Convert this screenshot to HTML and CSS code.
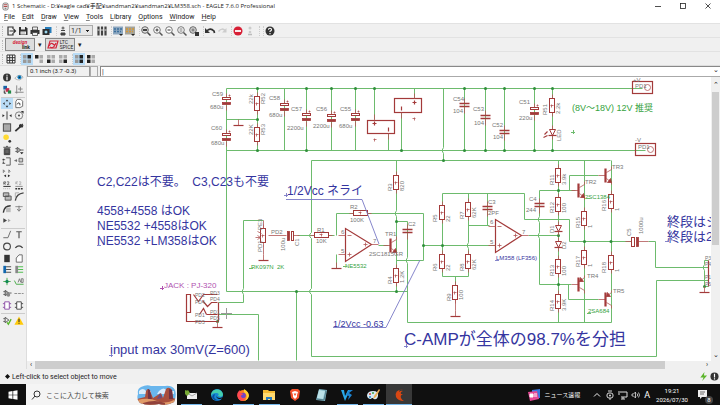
FILE: index.html
```
<!DOCTYPE html>
<html lang="ja">
<head>
<meta charset="utf-8">
<meta name="viewport" content="width=device-width, initial-scale=1">
<title>1 Schematic - EAGLE 7.6.0 Professional</title>
<link rel="stylesheet" href="styles.css">
</head>
<body>
<header class="titlebar">
  <svg class="app-icon" viewBox="0 0 8 10"><rect x="1" y="1" width="6" height="8" rx="2" fill="#eee" stroke="#777"/><path d="M2 3h4M2 5h4" stroke="#a33"/><path d="M3 7h2" stroke="#555"/></svg>
  <h1 class="title">1 Schematic - D:¥eagle cad¥手配¥sandman2¥sandman2¥LM358.sch - EAGLE 7.6.0 Professional</h1>
  <div class="window-controls">
    <button aria-label="Minimize"><svg viewBox="0 0 8 8"><path d="M1 4.500h6" stroke="#222" stroke-width=".8"/></svg></button>
    <button aria-label="Maximize"><svg viewBox="0 0 8 8"><rect x="1.500" y="1.500" width="5" height="5" fill="none" stroke="#222" stroke-width=".8"/></svg></button>
    <button aria-label="Close"><svg viewBox="0 0 8 8"><path d="M1.500 1.500l5 5m0-5l-5 5" stroke="#222" stroke-width=".8"/></svg></button>
  </div>
</header>

<nav class="menubar">
  <button><u>F</u>ile</button><button><u>E</u>dit</button><button><u>D</u>raw</button><button><u>V</u>iew</button><button><u>T</u>ools</button><button><u>L</u>ibrary</button><button><u>O</u>ptions</button><button><u>W</u>indow</button><button><u>H</u>elp</button>
</nav>

<div class="toolbar">
  <span class="grip"></span>
  <button aria-label="Open"><svg viewBox="0 0 12 12"><path d="M8 4V2H3v8h5V8" fill="none" stroke="#333" stroke-width="1.200"/><path d="M4.500 6H10M8.500 4L10.500 6L8.500 8" fill="none" stroke="#333" stroke-width="1.200"/></svg></button>
  <button aria-label="Save"><svg viewBox="0 0 12 12"><path d="M2 2h7l1.500 1.500V10H2z" fill="#333"/><path d="M4 2h4v2.500H4zM3.500 6.500h5.500V9.500H3.500z" fill="#eee"/><path d="M4 8h4" stroke="#888" stroke-width=".6"/></svg></button>
  <button aria-label="Print"><svg viewBox="0 0 12 12"><path d="M1.500 5h9v4h-9z" fill="#333"/><path d="M3.500 2h5v3h-5zM3.500 7.500h5V10.500h-5z" fill="#eee" stroke="#444" stroke-width=".8"/></svg></button>
  <button aria-label="CAM processor"><svg viewBox="0 0 12 12"><path d="M4 2h6.500v6H4z" fill="#267dbb"/><path d="M1.500 4h7v6h-7z" fill="#333"/><circle cx="5" cy="7" r="2" fill="#9cd7ee" stroke="#111" stroke-width=".8"/></svg></button>
  <span class="sep"></span>
  <button aria-label="Board"><svg viewBox="0 0 12 12"><circle cx="6" cy="3" r="1.500" fill="#777"/><path d="M4 5.500h4M4 8h4v2H4z" stroke="#444" fill="#444"/></svg></button>
  <select class="sheet" aria-label="Sheet"><option>1/1</option></select>
  <button class="spaced" aria-label="Use library"><svg viewBox="0 0 12 12"><path d="M2.500 1.500v9M6 1.500v9M9.500 1.500v9" stroke="#444" stroke-width="2.200"/><path d="M1.500 5h2M5 5h2M8.500 5h2" stroke="#ddd"/></svg></button>
  <span class="sep"></span>
  <button aria-label="Script"><svg viewBox="0 0 12 12"><rect x="1" y="1.500" width="10" height="8" fill="#8ba6bf"/><path d="M2 4h8M2 6.500h7" stroke="#3d6f9c" stroke-width="1.500" stroke-dasharray="2 1"/><path d="M7 9h4l-2 2z" fill="#222"/></svg></button>
  <button aria-label="Run ULP"><svg viewBox="0 0 12 12"><rect x="1" y="1.500" width="10" height="8" fill="#a3a39b"/><path d="M2 4h8M2 6.500h7" stroke="#d69835" stroke-width="1.500" stroke-dasharray="2 1"/><path d="M7 9h4l-2 2z" fill="#222"/></svg></button>
  <span class="sep"></span>
  <button aria-label="Zoom to fit"><svg viewBox="0 0 12 12"><circle cx="5" cy="5" r="3.300" fill="#ddd" stroke="#666"/><path d="M3 4h4v2H3z" fill="#444"/><path d="M7.500 7.500l3 3" stroke="#444" stroke-width="1.500"/></svg></button>
  <button aria-label="Zoom in"><svg viewBox="0 0 12 12"><circle cx="5" cy="5" r="3.300" fill="#fff" stroke="#777"/><path d="M3.500 5h3M5 3.500v3" stroke="#333"/><path d="M7.500 7.500l3 3" stroke="#555" stroke-width="1.500"/></svg></button>
  <button aria-label="Zoom out"><svg viewBox="0 0 12 12"><circle cx="5" cy="5" r="3.300" fill="#fff" stroke="#777"/><path d="M3.500 5h3" stroke="#333"/><path d="M7.500 7.500l3 3" stroke="#555" stroke-width="1.500"/></svg></button>
  <button aria-label="Redraw"><svg viewBox="0 0 12 12"><circle cx="5" cy="5" r="3.300" fill="#fff" stroke="#777"/><path d="M3.500 4h3M3.500 6h3" stroke="#777"/><path d="M7.500 7.500l3 3" stroke="#555" stroke-width="1.500"/></svg></button>
  <button aria-label="Zoom select"><svg viewBox="0 0 12 12"><circle cx="5" cy="5" r="3.300" fill="#ddd" stroke="#666"/><path d="M3.500 3.500h3v3h-3z" fill="#888"/><path d="M7 7h4v4H7z" fill="#333"/></svg></button>
  <span class="sep"></span>
  <button aria-label="Undo"><svg viewBox="0 0 12 12"><path d="M2.500 6.500Q6 2 10 6L10.500 8" fill="none" stroke="#333" stroke-width="1.700"/><path d="M1 3v5h5z" fill="#333"/></svg></button>
  <button aria-label="Redo" disabled><svg viewBox="0 0 12 12"><path d="M9.500 6Q6 2 2.500 6.500" fill="none" stroke="#ccc" stroke-width="1.500"/><path d="M10.500 3v4.500H6z" fill="#ccc"/></svg></button>
  <span class="sep"></span>
  <button aria-label="Stop"><svg viewBox="0 0 12 12"><circle cx="6" cy="6" r="4.500" fill="#d71f35"/><path d="M3 6h6" stroke="#fff" stroke-width="1.800"/></svg></button>
  <button aria-label="Go" disabled><svg viewBox="0 0 12 12"><circle cx="6" cy="3" r="1.500" fill="#ccc"/><circle cx="6" cy="7" r="1.300" fill="#ccc"/><path d="M4 9.500h4" stroke="#bbb" stroke-width="1.500"/></svg></button>
  <span class="sep"></span><span class="sep"></span>
  <button aria-label="Help"><svg viewBox="0 0 12 12"><circle cx="6" cy="6" r="4.500" fill="#333"/><path d="M4.500 4.800Q4.500 3.300 6 3.300T7.500 4.700Q7.500 5.600 6 6.300V7M6 8v1.200" fill="none" stroke="#fff" stroke-width="1.100"/></svg></button>
</div>

<div class="toolbar">
  <span class="grip"></span>
  <button class="brand"><span class="brand-red">design</span><span class="brand-dark">link</span></button>
  <button class="drop" aria-label="Design link menu">▾</button>
  <button class="brand brand-row"><svg viewBox="0 0 12 12"><path d="M3 2h8L9 9H1z" fill="none" stroke="#d3263c" stroke-width="1.200"/><path d="M2 7Q4 3 6 5T9 4M3 8Q6 10 8 6" fill="none" stroke="#d3263c" stroke-width="1.300"/></svg><span>LTC<br>SPICE</span></button>
  <button class="drop" aria-label="LTspice menu">▾</button>
</div>

<div class="toolbar">
  <span class="grip"></span>
  <button aria-label="Grid"><svg viewBox="0 0 12 12"><path d="M2 2h8v8H2zM2 4.700h8M2 7.400h8M4.700 2v8M7.400 2v8" fill="#fff" stroke="#333"/></svg></button>
  <span class="sep"></span>
  <button class="on" aria-label="Layer set 1"><svg viewBox="0 0 12 12"><path d="M2 2h3.500v3.500H2zM2 6.500h3.500V10H2zM6.500 6.500H10V10H6.500z" fill="#999"/><path d="M6.500 2H10v3.500H6.500z" fill="#222"/></svg></button>
  <button aria-label="Layer set 2"><svg viewBox="0 0 12 12"><path d="M6.500 2H10v3.500H6.500zM6.500 6.500H10V10H6.500z" fill="#aaa"/><path d="M2 2h3.500v3.500H2z" fill="#222"/></svg></button>
  <button aria-label="Layer set 3"><svg viewBox="0 0 12 12"><path d="M2 2h3.500v3.500H2zM6.500 2H10v3.500H6.500zM6.500 6.500H10V10H6.500z" fill="#aaa"/><path d="M2 6.500h3.500V10H2z" fill="#222"/></svg></button>
  <button aria-label="Layer set 4"><svg viewBox="0 0 12 12"><path d="M2 2h3.500v3.500H2zM2 6.500h3.500V10H2zM6.500 2H10v3.500H6.500z" fill="#aaa"/><path d="M6.500 6.500H10V10H6.500z" fill="#222"/></svg></button>
  <span class="sep"></span>
  <button class="on" aria-label="Layer set 5"><svg viewBox="0 0 12 12"><path d="M2 2h3.500v3.500H2zM2 6.500h3.500V10H2z" fill="#999"/><path d="M6.500 2H10v3.500H6.500zM6.500 6.500H10V10H6.500z" fill="#222"/></svg></button>
  <button aria-label="Layer set 6"><svg viewBox="0 0 12 12"><path d="M6.500 2H10v3.500H6.500zM6.500 6.500H10V10H6.500z" fill="#aaa"/><path d="M2 2h3.500v3.500H2zM2 6.500h3.500V10H2z" fill="#222"/></svg></button>
</div>

<main class="workspace">
  <aside class="palette">
    <div class="tools tools-view">
      <button aria-label="Info"><svg viewBox="0 0 12 12"><circle cx="6" cy="6" r="4.300" fill="#333"/><path d="M6 5v4M6 3v1" stroke="#fff" stroke-width="1.300"/></svg></button>
      <button aria-label="Show"><svg viewBox="0 0 12 12"><path d="M1.500 7Q6 1 10.500 5.500Q7 11 1.500 7z" fill="#fff" stroke="#aaa"/><circle cx="6.500" cy="5.800" r="2.200" fill="#1487cc"/><circle cx="6.500" cy="5.800" r="1" fill="#134"/></svg></button>
      <button aria-label="Display"><svg viewBox="0 0 12 12"><path d="M2 2h4v4H2z" fill="#1762a5"/><path d="M4.500 4.500h4v4h-4z" fill="#c42e50"/><path d="M7 7h3.500v3.500H7z" fill="#238947"/><path d="M3 7v3h2" fill="none" stroke="#222"/></svg></button>
      <button aria-label="Mark"><svg viewBox="0 0 12 12"><path d="M3.500 1.500v9M1.500 9H11M7.500 3v5M5 5.500h5" fill="none" stroke="#777" stroke-width=".9"/></svg></button>
    </div>
    <div class="tools tools-edit">
      <button class="on" aria-label="Move"><svg viewBox="0 0 12 12"><path d="M6 1.500l1.500 2h-3zM6 10.500L4.500 8.500h3zM1.500 6l2-1.500v3zM10.500 6L8.500 4.500v3z" fill="#333"/></svg></button>
      <button aria-label="Copy"><svg viewBox="0 0 12 12"><path d="M4 1.500h4l2 2V9L7 10.500H2.500V4z" fill="#fff" stroke="#666"/><path d="M4 7q1-3 3-1v2" fill="none" stroke="#333"/></svg></button>
      <button aria-label="Mirror"><svg viewBox="0 0 12 12"><path d="M6 1.500v9" stroke="#333"/><path d="M1 4.500L3.500 6L1 8zM11 4.500L8.500 6L11 8z" fill="#333"/></svg></button>
      <button aria-label="Rotate"><svg viewBox="0 0 12 12"><circle cx="6" cy="6" r="4" fill="none" stroke="#666" stroke-width=".9"/><circle cx="6" cy="6" r="1" fill="#333"/><path d="M8 1h3v3z" fill="#333"/></svg></button>
      <button aria-label="Group"><svg viewBox="0 0 12 12"><rect x="2" y="2" width="8" height="8" fill="#aaa" stroke="#444"/></svg></button>
      <button aria-label="Change"><svg viewBox="0 0 12 12"><path d="M2 10L7.500 5" stroke="#333" stroke-width="2"/><path d="M10 2L8.500 4L7 2.500" fill="none" stroke="#333" stroke-width="1.500"/><path d="M6 3v3h4l1-2.500" fill="#333"/></svg></button>
      <button class="lone" aria-label="Paste"><svg viewBox="0 0 12 12"><circle cx="5" cy="4.500" r="3" fill="#ffda32"/><circle cx="9" cy="9" r="1.500" fill="#333"/></svg></button>
      <button aria-label="Delete"><svg viewBox="0 0 12 12"><path d="M3 4h6v6.500H3zM2 2.500h8M5 1.500h2" fill="#444" stroke="#444"/><path d="M5 5v4M7 5v4" stroke="#aaa" stroke-width=".6"/></svg></button>
      <button aria-label="Add"><svg viewBox="0 0 12 12"><path d="M2 4h2M2 7h2M4 2.500v6l4-3zM8 5.500h3" stroke="#555" fill="#aaa"/><path d="M7 8h4l-2 2z" fill="#222"/></svg></button>
      <button aria-label="Pin swap"><svg viewBox="0 0 12 12"><path d="M5 2h4.500v8H5M1 4h3M1 8h3" fill="none" stroke="#555"/><path d="M2 3v6" stroke="#333" stroke-dasharray="2 1"/></svg></button>
      <button aria-label="Replace"><svg viewBox="0 0 12 12"><path d="M1 5h3M3 3.500v3M6 2.500h4v4H6zM5 9h6" fill="#ccc" stroke="#666"/></svg></button>
      <button class="lone" aria-label="Gate swap"><svg viewBox="0 0 12 12"><path d="M2 2v3q3-1.500 0-3M8 2v3q3-1.500 0-3" fill="none" stroke="#777"/><path d="M2.500 8.500L5 7v3zM9.500 8.500L7 7v3z" fill="#333"/></svg></button>
      <button aria-label="Name"><svg viewBox="0 0 12 12"><path d="M2.500 5V2h2v1.500h-2l2 1.500M6 2h2v1.500L6 5h2.500" fill="none" stroke="#555" stroke-width=".8"/><path d="M2 7h8" stroke="#222"/><path d="M2 9.500h8" stroke="#aaa" stroke-dasharray="1 1"/></svg></button>
      <button aria-label="Value"><svg viewBox="0 0 12 12"><path d="M2.500 4.500V2h2l-2 1.500 2 1M6 2h2v1.500L6 5h2.500" fill="none" stroke="#aaa" stroke-width=".8"/><path d="M2 7h8" stroke="#888"/><path d="M2 9.500h8" stroke="#333" stroke-width="1.500" stroke-dasharray="2 1"/></svg></button>
      <button aria-label="Smash"><svg viewBox="0 0 12 12"><path d="M2 2h6v4H2zM4 5.500h6.500v4.500H4z" fill="#bbb" stroke="#555"/></svg></button>
      <button aria-label="Miter"><svg viewBox="0 0 12 12"><path d="M2 10.500Q3 3 11 2" fill="none" stroke="#444" stroke-width="1.500"/><path d="M2 7V2h4" fill="none" stroke="#aaa"/></svg></button>
      <button aria-label="Split"><svg viewBox="0 0 12 12"><path d="M2 10.500Q3 3 10 3" fill="none" stroke="#333" stroke-width="1.500"/><path d="M5 5h5v5H5z" fill="#bbb"/></svg></button>
      <button aria-label="Optimize"><svg viewBox="0 0 12 12"><path d="M2 4h8" stroke="#888"/><path d="M6 3v5M4 6.500L6 9L8 6.500" fill="none" stroke="#777"/></svg></button>
      <button class="lone" aria-label="Invoke"><svg viewBox="0 0 12 12"><path d="M2 3.500L6 6L2 8.500z" fill="#444"/><path d="M7 4l3 2-3 2z" fill="#aaa"/></svg></button>
    </div>
    <div class="tools tools-draw">
      <button aria-label="Wire"><svg viewBox="0 0 12 12"><path d="M2 9.500h5L10 2" fill="none" stroke="#666"/></svg></button>
      <button aria-label="Text"><svg viewBox="0 0 12 12"><path d="M3 3h6M6 3v7" stroke="#555" stroke-width="1.300"/></svg></button>
      <button aria-label="Circle"><svg viewBox="0 0 12 12"><circle cx="6" cy="6" r="3.700" fill="none" stroke="#444" stroke-width="1.200"/></svg></button>
      <button aria-label="Arc"><svg viewBox="0 0 12 12"><path d="M2 7.500Q6 3 10 7.500" fill="none" stroke="#444" stroke-width="1.500"/></svg></button>
      <button aria-label="Rectangle"><svg viewBox="0 0 12 12"><path d="M3 2h6v8H3z" fill="#333"/></svg></button>
      <button aria-label="Polygon"><svg viewBox="0 0 12 12"><path d="M3 10V5.500L6 2h3.500v8z" fill="#fff" stroke="#666"/></svg></button>
      <button aria-label="Bus"><svg viewBox="0 0 12 12"><path d="M2 2h3v8H2z" fill="#1267ae"/><path d="M5 3h5.500M5 6h5.500M5 9h5.500" stroke="#444"/></svg></button>
      <button aria-label="Net"><svg viewBox="0 0 12 12"><path d="M2 2h3v8H2z" fill="#888"/><path d="M5 3h5.500M5 6h5.500M5 9h5.500" stroke="#4b4"/></svg></button>
      <button aria-label="Junction"><svg viewBox="0 0 12 12"><path d="M6 2v8M2 6h8" stroke="#4a4"/><circle cx="6" cy="6" r="1.800" fill="#185"/></svg></button>
      <button aria-label="Label"><svg viewBox="0 0 12 12"><path d="M1 5l2 4h8" fill="none" stroke="#4a4"/><path d="M5 7l1.500-4L8 7M8.500 3v4h2V3z" fill="none" stroke="#777"/></svg></button>
      <button aria-label="Attribute"><svg viewBox="0 0 12 12"><path d="M2 4h2M2 7h2M4 2.500v6l4-3zM8 5.500h3" stroke="#555" fill="#aaa"/><circle cx="7.500" cy="7.500" r="2" fill="#888"/></svg></button>
      <button aria-label="Dimension"><svg viewBox="0 0 12 12"><path d="M1 6h10" stroke="#888" stroke-dasharray="3 1"/></svg></button>
      <button aria-label="Module"><svg viewBox="0 0 12 12"><path d="M3.500 2h5v8h-5zM1.500 4h2M1.500 8h2M8.500 4h2M8.500 8h2" fill="#fff" stroke="#8b4da5"/></svg></button>
      <button aria-label="Port"><svg viewBox="0 0 12 12"><path d="M3.500 2h5v8h-5zM1.500 4h2M1.500 8h2M8.500 4h2M8.500 8h2" fill="#fff" stroke="#444"/></svg></button>
    </div>
    <div class="tools tools-check">
      <button aria-label="ERC"><svg viewBox="0 0 12 12"><path d="M2 4h2M2 7h2M4 2.500v6l4-3z" stroke="#555" fill="#eee"/><path d="M6 8l1.500 2L10.500 4.500" fill="none" stroke="#58b82b" stroke-width="1.500"/></svg></button>
      <button aria-label="Errors"><svg viewBox="0 0 12 12"><path d="M6 1.500l5 9H1z" fill="#ffca0a"/><path d="M6 4v3.500M6 8.500v1" stroke="#333" stroke-width="1.200"/></svg></button>
    </div>
  </aside>

  <section class="sheet-area">
    <div class="command-row">
      <output class="coords">0.1 inch (3.7 -0.3)</output>
      <span class="coord-mode"></span>
      <input class="command" type="text" aria-label="Command" value="|">
      <span class="command-drop">⌄</span>
    </div>
    <div class="view">
      <svg class="canvas" role="img" aria-label="Schematic">
        <defs>
          <g id="res"><path d="M0-11V-7M0 7V11"/><rect x="-3" y="-7" width="5" height="14" class="body"/><path d="M-1-1V2M-2 0H1"/></g>
          <g id="pcap"><path d="M0-8V-4M0 4V9"/><rect x="-4" y="-4" width="8" height="2" class="body"/><rect x="-4" y="1" width="8" height="2" class="solid"/><path d="M2-6H4M3-7V-5"/></g>
          <g id="cap"><path d="M0-7V-2M0 2V8"/><path d="M-5-2H5M-5 1H5" class="plate"/></g>
          <g id="npn"><path d="M-7 0H0M1-3L6-6V-9M1 3L6 7V9"/><path d="M0-7V7" class="bar"/><path d="M6 7L2 7L5 3z" class="solid"/></g>
          <g id="pnp"><path d="M-7 0H0M1 3L6 6V9M1-3L6-7V-9"/><path d="M0-7V7" class="bar"/><path d="M1-3L5-3L2-7z" class="solid"/></g>
          <g id="gnd"><path d="M0-6V0"/><path d="M-5 0H5" class="thick"/></g>
          <g id="diode"><path d="M0-7V7"/><path d="M-3-3H3L0 3z" class="body"/><path d="M-4 3H4" class="thick"/></g>
          <g id="amp"><path d="M0-17V16L26-1z" class="amp"/><path d="M-7-10H0M-7 9H0M26-1H33M2-10H6M2 9H6M4 7V11M18-1H22M20-3V1"/></g>
          <g id="box"><rect x="0" y="0" width="20" height="12" class="amp"/><circle cx="15" cy="6" r="3"/></g>
        </defs>
        <g transform="translate(-27 -77)">
        <g class="net" transform="translate(.500 .500)">
          <path d="M226 88H642M226 150H645M226 88V291M226 119H257M257 88V150M284 88V150M306 88V150M331 88V150M355 88V150"/>
          <path d="M374 88V119M388 133V150M414 88V98M401 112V150M443 88V147q-3 3 0 6V160M464 88V150M485 88V150M504 88V150M534 88V150M552 88V150"/>
          <path d="M311 160H610M311 160V232q-4 3 0 6V288q-4 3 0 6V356H656M226 291H407M296 291V360"/>
          <path d="M263 220H243V288q-3 3 0 6V302H218M218 314H258V360M297 235H334M336 235V213H423V260H396M336 254V268M378 245H388"/>
          <path d="M396 160V210q-3 3 0 6V291M396 221H407V257q-3 3 0 6V322H611M423 245H495M442 276V193H524V219H569V241H632"/>
          <path d="M468 193V242q-3 3 0 6V276M442 276H468M487 193V225M468 225H489M455 276V285M528 235H558M558 160V322M539 190H575M539 190V216q-3 3 0 6V232q-3 3 0 6V284H571M569 190V175H598M568 284V299H598"/>
          <path d="M584 160V322M611 160V322M648 241H655V267H708M656 280H708M656 280V356M708 260H704V264q-3 3 0 6V286H708"/>
        </g>
        <g class="dots">
          <circle cx="257.500" cy="88.500" r="1.500"/><circle cx="257.500" cy="119.500" r="1.500"/><circle cx="257.500" cy="150.500" r="1.500"/><circle cx="306.500" cy="88.500" r="1.500"/><circle cx="306.500" cy="150.500" r="1.500"/><circle cx="331.500" cy="88.500" r="1.500"/><circle cx="355.500" cy="88.500" r="1.500"/><circle cx="374.500" cy="88.500" r="1.500"/><circle cx="401.500" cy="150.500" r="1.500"/>
          <circle cx="464.500" cy="88.500" r="1.500"/><circle cx="464.500" cy="150.500" r="1.500"/><circle cx="485.500" cy="88.500" r="1.500"/><circle cx="485.500" cy="150.500" r="1.500"/><circle cx="504.500" cy="88.500" r="1.500"/><circle cx="504.500" cy="150.500" r="1.500"/><circle cx="534.500" cy="88.500" r="1.500"/><circle cx="534.500" cy="150.500" r="1.500"/><circle cx="552.500" cy="88.500" r="1.500"/><circle cx="552.500" cy="150.500" r="1.500"/><circle cx="443.500" cy="160.500" r="1.500"/>
          <circle cx="296.500" cy="291.500" r="1.500"/><circle cx="396.500" cy="291.500" r="1.500"/><circle cx="396.500" cy="221.500" r="1.500"/><circle cx="423.500" cy="245.500" r="1.500"/><circle cx="442.500" cy="245.500" r="1.500"/><circle cx="558.500" cy="190.500" r="1.500"/><circle cx="558.500" cy="235.500" r="1.500"/><circle cx="558.500" cy="284.500" r="1.500"/><circle cx="584.500" cy="241.500" r="1.500"/><circle cx="611" cy="241.500" r="1.500"/><circle cx="704.500" cy="286.500" r="1.500"/><circle cx="217.500" cy="321.500" r="1.500"/>
        </g>
        <g class="part" transform="translate(.500 .500)">
          <use href="#pcap" x="226" y="101"/><use href="#pcap" x="226" y="137"/><use href="#pcap" x="284" y="107"/><use href="#pcap" x="306" y="117"/><use href="#pcap" x="331" y="118"/><use href="#pcap" x="355" y="117"/><use href="#pcap" x="534" y="111"/>
          <use href="#gnd" x="238" y="125"/><use href="#gnd" x="263" y="260"/><use href="#gnd" x="336" y="268"/><use href="#gnd" x="455" y="316"/><use href="#gnd" x="704" y="292"/><use href="#gnd" x="217" y="327"/>
          <path d="M455 299V310"/>
          <use href="#res" x="257" y="103"/><use href="#res" x="257" y="134"/><use href="#res" x="396" y="182"/><use href="#res" x="396" y="275"/><use href="#res" x="552" y="105"/><use href="#res" x="442" y="212"/><use href="#res" x="442" y="261"/><use href="#res" x="468" y="209"/><use href="#res" x="468" y="261"/><use href="#res" x="455" y="292"/><use href="#res" x="558" y="175"/><use href="#res" x="558" y="204"/><use href="#res" x="558" y="266"/><use href="#res" x="558" y="301"/><use href="#res" x="584" y="218"/><use href="#res" x="584" y="257"/><use href="#res" x="611" y="201"/><use href="#res" x="611" y="262"/><use href="#res" x="263" y="235"/>
          <path d="M263 220V228M263 245V254M268 235H286M293 235H299M257 231l4 2M255 237h5l-3-2m3 2l-3 2"/>
          <use href="#res" transform="translate(321 235) rotate(90)"/><use href="#res" transform="translate(360 213) rotate(90)"/>
          <rect x="287" y="231" width="2" height="9" class="solid"/><rect x="291" y="231" width="2" height="9" class="body"/>
          <use href="#cap" x="464" y="105"/><use href="#cap" x="485" y="117"/><use href="#cap" x="504" y="132"/><use href="#cap" x="407" y="231"/><use href="#cap" x="487" y="208"/><use href="#cap" x="539" y="205"/>
          <rect x="367" y="120" width="27" height="13" class="amp"/><rect x="394" y="98" width="27" height="14" class="amp"/>
          <path d="M374 114V120M388 133V139M414 93V98M401 112V118"/><path d="M372 123h4M374 121v4M388 127v4M412 102h4M414 100v4M401 106v4" class="thick"/><path d="M373 139h3M374 138v3M412 118h3M414 117v3"/>
          <use href="#amp" x="345" y="245"/><use href="#amp" x="495" y="236"/>
          <use href="#npn" x="390" y="245"/><use href="#npn" x="578" y="190"/><use href="#npn" x="605" y="175"/><use href="#pnp" x="578" y="284"/><use href="#pnp" x="605" y="299"/>
          <use href="#diode" x="552" y="132"/><use href="#diode" x="558" y="228"/><use href="#diode" x="558" y="244"/><path d="M547 131l-3 3M547 135l-4 2" class="thick"/>
          <path d="M625 241H631M638 241H648"/><rect x="631" y="237" width="3" height="9" class="body"/><rect x="636" y="237" width="2" height="9" class="solid"/>
          <use href="#box" x="632" y="81"/><use href="#box" x="635" y="143"/>
          <path d="M186 294h4v18h-4zM186 312v9H217M218 302v19M206 314H217M198 321H217" class="thick"/><path d="M193 294l5 7l5-7H217M202 300l5 6l4-4H217M199 314l4-6l3 6" class="thick"/><path d="M708 260v26" class="thick"/>
        </g>
        <path class="cross" d="M226.500 308v11M221 313.500h11"/>
        <g class="leader"><path d="M286 199.500H362L379 244M333 327.500H386L420 260"/></g>
        <g class="lbl">
          <text x="212" y="96">C59</text><text x="210" y="109">680u</text><text x="211" y="130">C60</text><text x="211" y="145">680u</text><text x="269" y="100">C58</text><text x="269" y="117">680u</text><text x="291" y="111">C57</text><text x="287" y="130">2200u</text><text x="316" y="111">C56</text><text x="313" y="128">2200u</text><text x="340" y="111">C55</text><text x="339" y="128">680u</text>
          <text x="453" y="101">C54</text><text x="453" y="113">104</text><text x="473" y="111">C53</text><text x="474" y="125">104</text><text x="492" y="127">C52</text><text x="493" y="139">104</text><text x="519" y="104">C51</text><text x="519" y="120">220u</text>
          <text x="317" y="232">R1</text><text x="316" y="243">10K</text><text x="350" y="209">R2</text><text x="350" y="222">100K</text><text x="408" y="226">C2</text><text x="385" y="236">TR1</text><text x="369" y="256">2SC1815GR</text><text x="488" y="204">C3</text><text x="488" y="215">2PF</text><text x="529" y="201">C4</text><text x="526" y="212">244</text>
          <text x="341" y="234">6</text><text x="341" y="253">5</text><text x="373" y="243">7</text><text x="490" y="224">6</text><text x="490" y="244">5</text><text x="522" y="234">7</text>
          <text x="612" y="169">TR3</text><text x="585" y="184">TR2</text><text x="587" y="278">TR4</text><text x="613" y="293">TR5</text><text x="633" y="82">+V</text><text x="635" y="142">-V</text><text x="635" y="88">PD1</text><text x="638" y="149">PD1</text><text x="271" y="234">PD2</text>
          <text transform="translate(253 104) rotate(-90)">22k</text><text transform="translate(265 104) rotate(-90)">R52</text><text transform="translate(253 135) rotate(-90)">22K</text><text transform="translate(265 135) rotate(-90)">R53</text>
          <text transform="translate(392 191) rotate(-90)">R3</text><text transform="translate(404 191) rotate(-90)">820</text><text transform="translate(392 284) rotate(-90)">R4</text><text transform="translate(404 283) rotate(-90)">1.2K</text><text transform="translate(547 115) rotate(-90)">R51</text><text transform="translate(560 114) rotate(-90)">2.2k</text><text transform="translate(561 141) rotate(-90)">LED</text>
          <text transform="translate(437 222) rotate(-90)">R5</text><text transform="translate(450 222) rotate(-90)">22</text><text transform="translate(437 271) rotate(-90)">R6</text><text transform="translate(450 271) rotate(-90)">22</text><text transform="translate(464 219) rotate(-90)">R7</text><text transform="translate(476 218) rotate(-90)">62K</text><text transform="translate(464 271) rotate(-90)">R8</text><text transform="translate(476 270) rotate(-90)">62K</text><text transform="translate(451 301) rotate(-90)">R9</text><text transform="translate(463 300) rotate(-90)">100</text>
          <text transform="translate(554 185) rotate(-90)">R11</text><text transform="translate(566 185) rotate(-90)">3.9k</text><text transform="translate(554 213) rotate(-90)">R12</text><text transform="translate(566 213) rotate(-90)">100</text><text transform="translate(554 276) rotate(-90)">R13</text><text transform="translate(566 276) rotate(-90)">100</text><text transform="translate(554 311) rotate(-90)">R14</text><text transform="translate(566 311) rotate(-90)">3.9K</text><text transform="translate(554 233) rotate(-90)">D1</text><text transform="translate(566 249) rotate(-90)">D2</text>
          <text transform="translate(580 228) rotate(-90)">R15</text><text transform="translate(592 228) rotate(-90)">1</text><text transform="translate(580 267) rotate(-90)">R17</text><text transform="translate(592 267) rotate(-90)">1</text><text transform="translate(606 211) rotate(-90)">R16</text><text transform="translate(619 211) rotate(-90)">1</text><text transform="translate(606 273) rotate(-90)">R18</text><text transform="translate(619 272) rotate(-90)">1</text>
          <text transform="translate(631 236) rotate(-90)">C5</text><text transform="translate(643 234) rotate(-90)">1000u</text><text transform="translate(299 246) rotate(-90)">C1</text><text transform="translate(285 251) rotate(-90)">100u</text><text transform="translate(262 230) rotate(-90)">PE3</text><text transform="translate(262 252) rotate(-90)">PD1</text>
        </g>
        <g class="lbl pin">
          <text x="195" y="297">PD2</text><text x="210" y="295">PD3</text><text x="195" y="304">PD4</text><text x="210" y="301">PD4</text><text x="195" y="317">PD1</text><text x="210" y="314">PD1</text><text x="195" y="324">PD5</text><text x="210" y="320">PD5</text><text x="705" y="260">P3</text><text x="705" y="266">P4</text><text x="705" y="279">P1</text><text x="705" y="286">P5</text>
        </g>
        <g class="lbl green">
          <text x="251" y="269">RK097N&#160;&#160;2K</text><text x="345" y="268">NE5532</text><text x="585" y="199">2SC1384</text><text x="588" y="313">2SA684</text>
          <text x="572" y="111" class="mid">(8V～18V) 12V 推奨</text>
        </g>
        <path class="net" d="M571 132.500h4M573.500 130v4M249 268.500h4M343 266.500h4M586 198.500h4M587 313.500h4"/>
        <g class="note">
          <text x="97" y="186">C2,C22は不要。&#160; C3,C23も不要</text>
          <text x="97" y="215">4558+4558 はOK</text>
          <text x="97" y="230">NE5532 +4558はOK</text>
          <text x="97" y="245">NE5532 +LM358はOK</text>
          <text x="287" y="195">1/2Vcc ネライ</text>
          <text x="333" y="327" class="mid">1/2Vcc -0.63</text>
          <text x="496" y="260" class="small">LM358 (LF356)</text>
          <text x="110" y="354" class="large">input max 30mV(Z=600)</text>
          <text x="404" y="345" class="huge">C-AMPが全体の98.7%を分担</text>
          <text x="667" y="226" class="large">終段はシ</text>
          <text x="667" y="241" class="large">終段は2</text>
        </g>
        <path class="leader" d="M284 195.500h4M286.500 193v4M109 355.500h4M111.500 353v4M404 346.500h4M406.500 344v4M495 260.500h4M97 245.500h4M665 241.500h4"/>
        <text x="164" y="288" class="jack">JACK : PJ-320</text><path class="jack-mark" d="M160 288.500h4M162.500 286v4"/>
        </g>
      </svg>
      <div class="vscroll"><span>⌃</span><i class="vthumb"></i><b></b><span>⌄</span></div>
    </div>
    <div class="hscroll"><span>‹</span><i class="hthumb"></i><b></b><span>›</span></div>
  </section>
</main>

<footer class="statusbar">
  <svg class="diamond" viewBox="0 0 6 6"><path d="M3 0L6 3L3 6L0 3z" fill="#111"/></svg>
  <span class="status-text">Left-click to select object to move</span>
  <svg class="status-icon" viewBox="0 0 10 10"><path d="M6 0L1.500 6H5L3.500 10L9 4H5.500z" fill="#5cb52c"/></svg>
  <svg class="status-icon" viewBox="0 0 10 10"><circle cx="5" cy="5" r="4.500" fill="#333"/><path d="M5 2v4M5 7v1.300" stroke="#fff" stroke-width="1.300"/></svg>
</footer>

<nav class="taskbar">
  <button class="start" aria-label="Start"><svg viewBox="0 0 10 10"><path d="M.500 1.700L4.500 1v3.700h-4zM5.200 .900L9.500.300v4.400H5.200zM.500 5.300h4V9l-4-.700zM5.200 5.300h4.300v4.400l-4.300-.600z" fill="#fff"/></svg></button>
  <label class="search">
    <svg class="lens" viewBox="0 0 10 10"><circle cx="6" cy="4" r="3" fill="none" stroke="#333"/><path d="M4 6L1 9.500" stroke="#333"/></svg>
    <input type="text" value="ここに入力して検索" aria-label="Search">
    <svg class="desert" viewBox="0 0 39 20"><defs><clipPath id="cloud"><path d="M4 2Q10-1 14 1H28Q35 0 38 5Q40 11 37 17Q30 21 22 19Q10 21 3 18Q-1 14 1 9Q0 4 4 2z"/></clipPath></defs><g clip-path="url(#cloud)"><path d="M0 0h39v20H0z" fill="#69b6ed"/><path d="M2 6q4-4 7 0h5v3H2zM22 6q5-5 8 0h7v3H20z" fill="#d9ecfb"/><path d="M0 14L8 12L9 6q2-4 4 0L16 13L24 8l2 5L29 4q3-3 6 1L36 13L39 14V20H0z" fill="#a94f3d"/><path d="M11 4v10l4 1L13 5zM32 4v10h4L35 5z" fill="#713344"/><path d="M20 14l3-6 2 5z" fill="#6a4b80"/><path d="M0 15q12-3 20 1t19-2v6H0z" fill="#e09a67"/><path d="M6 18q12-4 22 0v2H6z" fill="#91413b"/></g></svg>
  </label>
  <div class="apps">
    <button class="running" aria-label="Mail"><svg viewBox="0 0 14 14"><path d="M3 5h10v6H3z" fill="#eee"/><path d="M3 5l5 3 5-3" fill="none" stroke="#aaa"/><path d="M1 2q2 1 3 0l2 3-3 3-2-2z" fill="#75a833"/></svg></button>
    <button aria-label="Edge"><svg viewBox="0 0 14 14"><circle cx="7" cy="7" r="6" fill="#1687d4"/><path d="M1 8C1-1 13 0 13 7Q12 10 8 8Q10 5 6 5Q2 5 1 8z" fill="#43cfae"/><path d="M5 6Q2 12 10 12Q4 14 2 9Q3 6 5 6z" fill="#0b4f9c"/><path d="M6 7q0 3 4 3l3-1q-1 2-3 2-4 0-4-4z" fill="#101010"/></svg></button>
    <button class="running" aria-label="Firefox"><svg viewBox="0 0 14 14"><circle cx="7" cy="7.500" r="5.500" fill="#ff7b22"/><path d="M8 1q5 3 5 7-1 4-5 5 4-3 2-7-3-2-2-5z" fill="#ffcf32"/><circle cx="7" cy="7.500" r="2.800" fill="#7044c8"/><path d="M1.500 5l2-3 1 3 3 1-3 2q2 4 6 2-3 4-7 2-3-3-2-7z" fill="#ff4953"/></svg></button>
    <button class="running" aria-label="Explorer"><svg viewBox="0 0 14 14"><path d="M1 2h5l1 1h6v9H1z" fill="#f4ba34"/><path d="M1 5h12v7H1z" fill="#ffda70"/><path d="M4 12V9h6v3H8v-1H6v1z" fill="#267ac0"/></svg></button>
    <button aria-label="Brave"><svg viewBox="0 0 14 14"><path d="M4 1h6l2 2-1 7-4 3-4-3-1-7z" fill="#f4502b"/><path d="M4 4l3-1 3 1-1 3 0 2-2 2-2-2V7z" fill="#fff"/><path d="M5.500 5.500h3L7 8z" fill="#f4502b"/></svg></button>
    <button aria-label="Notepad"><svg viewBox="0 0 14 14"><path d="M5 1l8 1-2 11-9-1z" fill="#7eb4c4"/><path d="M5 2l6 1-2 8-6-1z" fill="#bce1e8"/><path d="M11 3l1 0-2 9-8-1" fill="none" stroke="#557c88"/></svg></button>
    <button class="running" aria-label="VS"><svg viewBox="0 0 14 14"><path d="M1 2h3l1 6 3-6h2L5 13z" fill="#29a9e9"/><path d="M13 2L9 5l3 2-4 5 1-4-3-1 3-5z" fill="#1d83d1"/></svg></button>
    <button class="running" aria-label="Paint"><svg viewBox="0 0 14 14"><path d="M7 3q6 0 5 5-1 4-4 3-2-2-3 0-4 0-4-4 1-4 6-4z" fill="#d8eaf4"/><circle cx="4" cy="6" r="1" fill="#d54437"/><circle cx="7" cy="5" r="1" fill="#43a546"/><circle cx="4" cy="9" r="1" fill="#2887cc"/><path d="M13 1L8 8l-1 3 3-2 4-7z" fill="#edb15a"/></svg></button>
    <button class="running active" aria-label="EAGLE"><svg viewBox="0 0 14 14"><path d="M11 1Q7 1 7 4q2-2 4-1-3 1-2 3l2 0q-3 1-2 4 1 2 3 3-6 0-8-4Q2 2 11 1z" fill="#d84713"/></svg></button>
  </div>
  <div class="tray">
    <button class="news"><svg viewBox="0 0 12 12"><path d="M4 1l8-1v9H4z" fill="#3976df"/><path d="M0 3l9-1 2 8-9 2z" fill="#e64795"/><path d="M2 5h3v3H2zM6 5h3M6 7h3" fill="#fff" stroke="#fff"/></svg>ニュース速報</button>
    <svg viewBox="0 0 10 10"><path d="M2 6.500L5 3.500L8 6.500" fill="none" stroke="#eee"/></svg>
    <svg viewBox="0 0 10 10"><rect x="2" y="3" width="6" height="5" rx="2" fill="none" stroke="#ddd"/><circle cx="5" cy="5.500" r="1" fill="#ddd"/><path d="M3 1h4M4 9h2" stroke="#ddd"/></svg>
    <svg viewBox="0 0 10 10"><path d="M2 2h7v5H3M5 7v2M3 9h4M1 1v4" fill="none" stroke="#ddd"/></svg>
    <svg viewBox="0 0 10 10"><path d="M1 4h1.500L4.500 2v6L2.500 6H1z" fill="none" stroke="#ddd" stroke-width=".8"/><path d="M6 3.500q1.500 1.500 0 3M7.500 2.500q2 2.500 0 5" fill="none" stroke="#ddd" stroke-width=".8"/></svg>
    <span class="ime">A</span>
    <time class="clock">19:21<br>2026/07/30</time>
    <span class="notify"><svg viewBox="0 0 12 12"><path d="M1 1h9v7H5L3 10V8H1z" fill="#eee"/><path d="M3 3h5M3 5h4" stroke="#333" stroke-width=".7"/></svg><span class="badge">8</span></span>
  </div>
</nav>
</body>
</html>
```
FILE: styles.css
```
* { box-sizing: border-box; }
body {
  margin: 0;
  height: 100vh;
  display: flex;
  flex-direction: column;
  overflow: hidden;
  background: #f0f0f0;
  color: #222;
  font-family: Roboto, "Noto Sans CJK JP", sans-serif;
  font-size: 7px;
}
button, input, select { font: inherit; color: inherit; margin: 0; padding: 0; border: 0; background: none; border-radius: 0; }
button { display: block; }
svg { display: block; flex: none; }

.titlebar { display: flex; align-items: center; height: 12px; flex: none; padding-left: 2px; gap: 3px; background: #fff; }
.app-icon { width: 7px; height: 9px; }
.title { flex: 1; margin: 0; font-size: 6px; font-weight: 400; line-height: 12px; font-family: "Open Sans", "Noto Sans CJK JP", sans-serif; white-space: nowrap; }
.window-controls { display: flex; }
.window-controls button { width: 25px; display: grid; place-items: center; }
.window-controls svg { width: 8px; height: 8px; }

.menubar { display: flex; gap: 7px; height: 11px; flex: none; padding-left: 4px; background: #fff; line-height: 11px; }
.menubar u { text-underline-offset: 1px; text-decoration-thickness: 1px; text-decoration-color: #888; }

.toolbar { display: flex; align-items: center; height: 14px; flex: none; padding-left: 2px; border-top: 1px solid #e2e2e2; }
.toolbar button { flex: none; }
.toolbar svg { width: 12px; height: 12px; }
.grip { width: 3px; height: 10px; border-left: 1px dotted #bbb; }
.sep { width: 4px; height: 10px; border-right: 1px dotted #ccc; }
.on { background: #b9dcf6; }
.sheet {
  width: 24px;
  height: 11px;
  padding-left: 1px;
  border: 1px solid #aaa;
  appearance: none;
  background:
    linear-gradient(to bottom left, #222 50%, transparent 0) 16px 4px / 2px 2px no-repeat,
    linear-gradient(to bottom right, #222 50%, transparent 0) 18px 4px / 2px 2px no-repeat,
    #e6e6e6;
}
.spaced { margin-left: 3px; }
.toolbar .brand { width: 30px; height: 13px; border: 1px solid #888; background: #ddd; line-height: 5px; font-size: 5px; display: flex; flex-direction: column; justify-content: center; padding: 0 4px; font-weight: 700; }
.brand-red { color: #d3263c; font-style: italic; }
.brand-dark { align-self: flex-end; }
.toolbar .brand-row { flex-direction: row; align-items: center; font-weight: 400; text-align: left; padding: 0; gap: 1px; }
.drop { width: 10px; }

.workspace { flex: 1; min-height: 0; display: flex; border-top: 1px solid #ddd; }
.palette { width: 27px; flex: none; padding: 5px 1px 0; border-right: 1px solid #ddd; }
.tools { display: grid; grid-template-columns: 12px 12px; grid-auto-rows: 1fr; align-items: center; }
.tools + .tools { border-top: 1px solid #ccc; margin-top: 2px; }
.tools button { height: 11px; }
.tools svg { width: 12px; height: 11px; }
.tools .lone { grid-column: 1 / 3; width: 12px; }
.tools-view { height: 24px; }
.tools-edit { height: 129px; }
.tools-draw { height: 83px; }
.tools-check { height: 13px; }

.sheet-area { flex: 1; min-width: 0; display: flex; flex-direction: column; }
.command-row { display: flex; height: 11px; flex: none; border-bottom: 1px solid #aaa; }
.coords { width: 63px; padding-left: 2px; border: 1px solid #999; border-bottom: 0; line-height: 8px; font-size: 6px; white-space: nowrap; }
.coord-mode { width: 8px; border: 1px solid #aaa; border-bottom: 0; }
.command { flex: 1; min-width: 0; margin-left: 2px; border: 1px solid #888; border-width: 1px 0 0 1px; background: #fff; padding-left: 1px; }
.command-drop { width: 9px; background: #fff; border-top: 1px solid #888; line-height: 6px; text-align: center; }

.view { flex: 1; min-height: 0; display: flex; }
.canvas { flex: 1; min-width: 0; height: 100%; background: #fff; overflow: hidden; font-family: "Liberation Sans", "Noto Sans CJK JP", sans-serif; }
.vscroll { width: 9px; flex: none; display: flex; flex-direction: column; align-items: center; padding: 3px 0 1px; line-height: 10px; }
.vthumb { width: 7px; flex: 154; margin-top: 2px; background: #cdcdcd; }
.vscroll b { flex: 106; }
.hscroll { height: 8px; flex: none; display: flex; align-items: center; line-height: 6px; padding-left: 3px; padding-right: 12px; }
.hthumb { flex: 626; height: 8px; margin-left: 3px; background: #cdcdcd; }
.hscroll b { flex: 41; }

.net { fill: none; stroke: #6dbb6d; stroke-width: 1; }
.dots { fill: #2f8f3b; }
.part { fill: none; stroke: #b15757; stroke-width: .8; }
.body { fill: #fff; stroke: #a33a3a; stroke-width: 1; }
.solid { fill: #a33a3a; stroke: #a33a3a; stroke-width: .8; }
.plate { stroke: #a33a3a; stroke-width: 1.500; }
.bar { stroke: #a33a3a; stroke-width: 2.200; }
.thick { stroke: #a33a3a; stroke-width: 1.200; }
.amp { stroke: #a33a3a; stroke-width: 1.200; }
.cross { stroke: #999; }
.leader { fill: none; stroke: #7878c5; stroke-width: .9; }
.lbl { fill: #777; font-size: 6px; }
.pin { font-size: 5px; }
.green { fill: #35a23d; }
.note { fill: #3535a0; font-size: 12px; }
.mid { font-size: 9px; }
.small { font-size: 6px; }
.large { font-size: 13px; }
.huge { font-size: 17px; }
.jack { fill: #b052b0; font-size: 8px; }
.jack-mark { stroke: #b052b0; }

.statusbar { display: flex; align-items: center; height: 15px; flex: none; padding: 0 1px 0 5px; gap: 2px; }
.diamond { width: 5px; height: 5px; }
.status-text { flex: 1; }
.status-icon { width: 9px; height: 9px; }

.taskbar { display: flex; height: 21px; flex: none; background: #101010; color: #fff; }
.start { width: 26px; display: grid; place-items: center; }
.start svg { width: 10px; height: 10px; }
.search { display: flex; align-items: center; width: 151px; background: #f4f4f4; color: #444; padding-left: 5px; }
.lens { width: 10px; height: 10px; }
.search input { flex: 1; min-width: 0; margin-left: 5px; }
.desert { width: 39px; height: 20px; margin-right: 1px; }
.apps { display: flex; padding-left: 1px; }
.apps button { width: 26px; height: 21px; display: grid; place-items: center; }
.apps svg { width: 14px; height: 14px; }
.apps .running { background: linear-gradient(#76b9ed, #76b9ed) bottom / 21px 1px no-repeat; }
.apps .active { background-color: #383838; background-size: 26px 1px; }
.tray { display: flex; align-items: center; margin-left: auto; gap: 3px; padding-right: 11px; }
.tray svg { width: 10px; height: 10px; }
.news { display: flex; align-items: center; gap: 4px; font-size: 6px; margin-right: 9px; }
.tray .news svg { width: 12px; height: 12px; }
.ime { font-size: 9px; }
.clock { font-size: 6px; line-height: 9px; text-align: center; margin: 0 6px 0 3px; }
.notify { position: relative; }
.tray .notify svg { width: 12px; height: 12px; }
.badge { position: absolute; right: -4px; bottom: -3px; width: 8px; height: 8px; border-radius: 50%; background: #444; font-size: 6px; line-height: 8px; text-align: center; }
```
